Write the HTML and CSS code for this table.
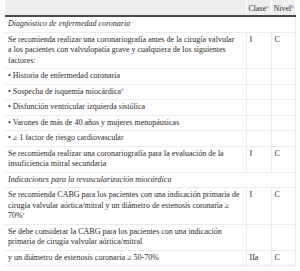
FILE: index.html
```html
<!DOCTYPE html>
<html lang="es">
<head>
<meta charset="utf-8">
<link rel="stylesheet" href="styles.css">
</head>
<body>
<table class="rec">
  <colgroup>
    <col class="c-text">
    <col class="c-cls">
    <col class="c-lvl">
  </colgroup>
  <thead>
    <tr>
      <th></th>
      <th>Clase<sup class="ref">a</sup></th>
      <th>Nivel<sup class="ref">b</sup></th>
    </tr>
  </thead>
  <tbody>
    <tr class="section"><td colspan="3">Diagnóstico de enfermedad coronaria</td></tr>
    <tr><td>Se recomienda realizar una coronariografía antes de la cirugía valvular a los pacientes con valvulopatía grave y cualquiera de los siguientes factores:</td><td>I</td><td>C</td></tr>
    <tr><td>• Historia de enfermedad coronaria</td><td></td><td></td></tr>
    <tr><td>• Sospecha de isquemia miocárdica<sup class="ref">d</sup></td><td></td><td></td></tr>
    <tr><td>• Disfunción ventricular izquierda sistólica</td><td></td><td></td></tr>
    <tr><td>• Varones de más de 40 años y mujeres menopáusicas</td><td></td><td></td></tr>
    <tr><td>• ≥ 1 factor de riesgo cardiovascular</td><td></td><td></td></tr>
    <tr><td>Se recomienda realizar una coronariografía para la evaluación de la insuficiencia mitral secundaria</td><td>I</td><td>C</td></tr>
    <tr class="section"><td colspan="3">Indicaciones para la revascularización miocárdica</td></tr>
    <tr><td>Se recomienda CABG para los pacientes con una indicación primaria de cirugía valvular aórtica/mitral y un diámetro de estenosis coronaria ≥ 70%<sup class="note">e</sup></td><td>I</td><td>C</td></tr>
    <tr><td>Se debe considerar la CABG para los pacientes con una indicación primaria de cirugía valvular aórtica/mitral</td><td></td><td></td></tr>
    <tr><td>y un diámetro de estenosis coronaria ≥ 50-70%</td><td>IIa</td><td>C</td></tr>
  </tbody>
</table>
</body>
</html>
```

FILE: styles.css
```css
html, body {
  margin: 0;
  padding: 0;
  background: #fff;
}
body {
  font-family: "Liberation Serif", "Times New Roman", serif;
  font-size: 8px;
  line-height: 10.5px;
  color: #2a2a2a;
}
.rec {
  margin-left: 5px;
  width: 290px;
  border-collapse: collapse;
  table-layout: fixed;
}
.c-text { width: 241px; }
.c-cls { width: 25px; }
.c-lvl { width: 24px; }
thead tr {
  background: #eeeeee;
}
th {
  font-weight: normal;
  text-align: left;
  padding: 3px 1px 1px 2px;
  height: 11px;
  line-height: 11px;
  border-bottom: 2px solid #4a4a4a;
  border-left: 1px solid #fff;
  white-space: nowrap;
}
th:first-child { border-left: none; }
td {
  padding: 2px 3px;
  vertical-align: top;
  border-bottom: 1px solid #ececec;
  border-right: 1px solid #ececec;
}
td:first-child {
  padding-right: 6px;
}
.section td {
  font-style: italic;
}
sup {
  font-size: 5px;
  line-height: 0;
  vertical-align: 3px;
}
.ref { color: #6a6ae6; }
.note { color: #555; }
```
